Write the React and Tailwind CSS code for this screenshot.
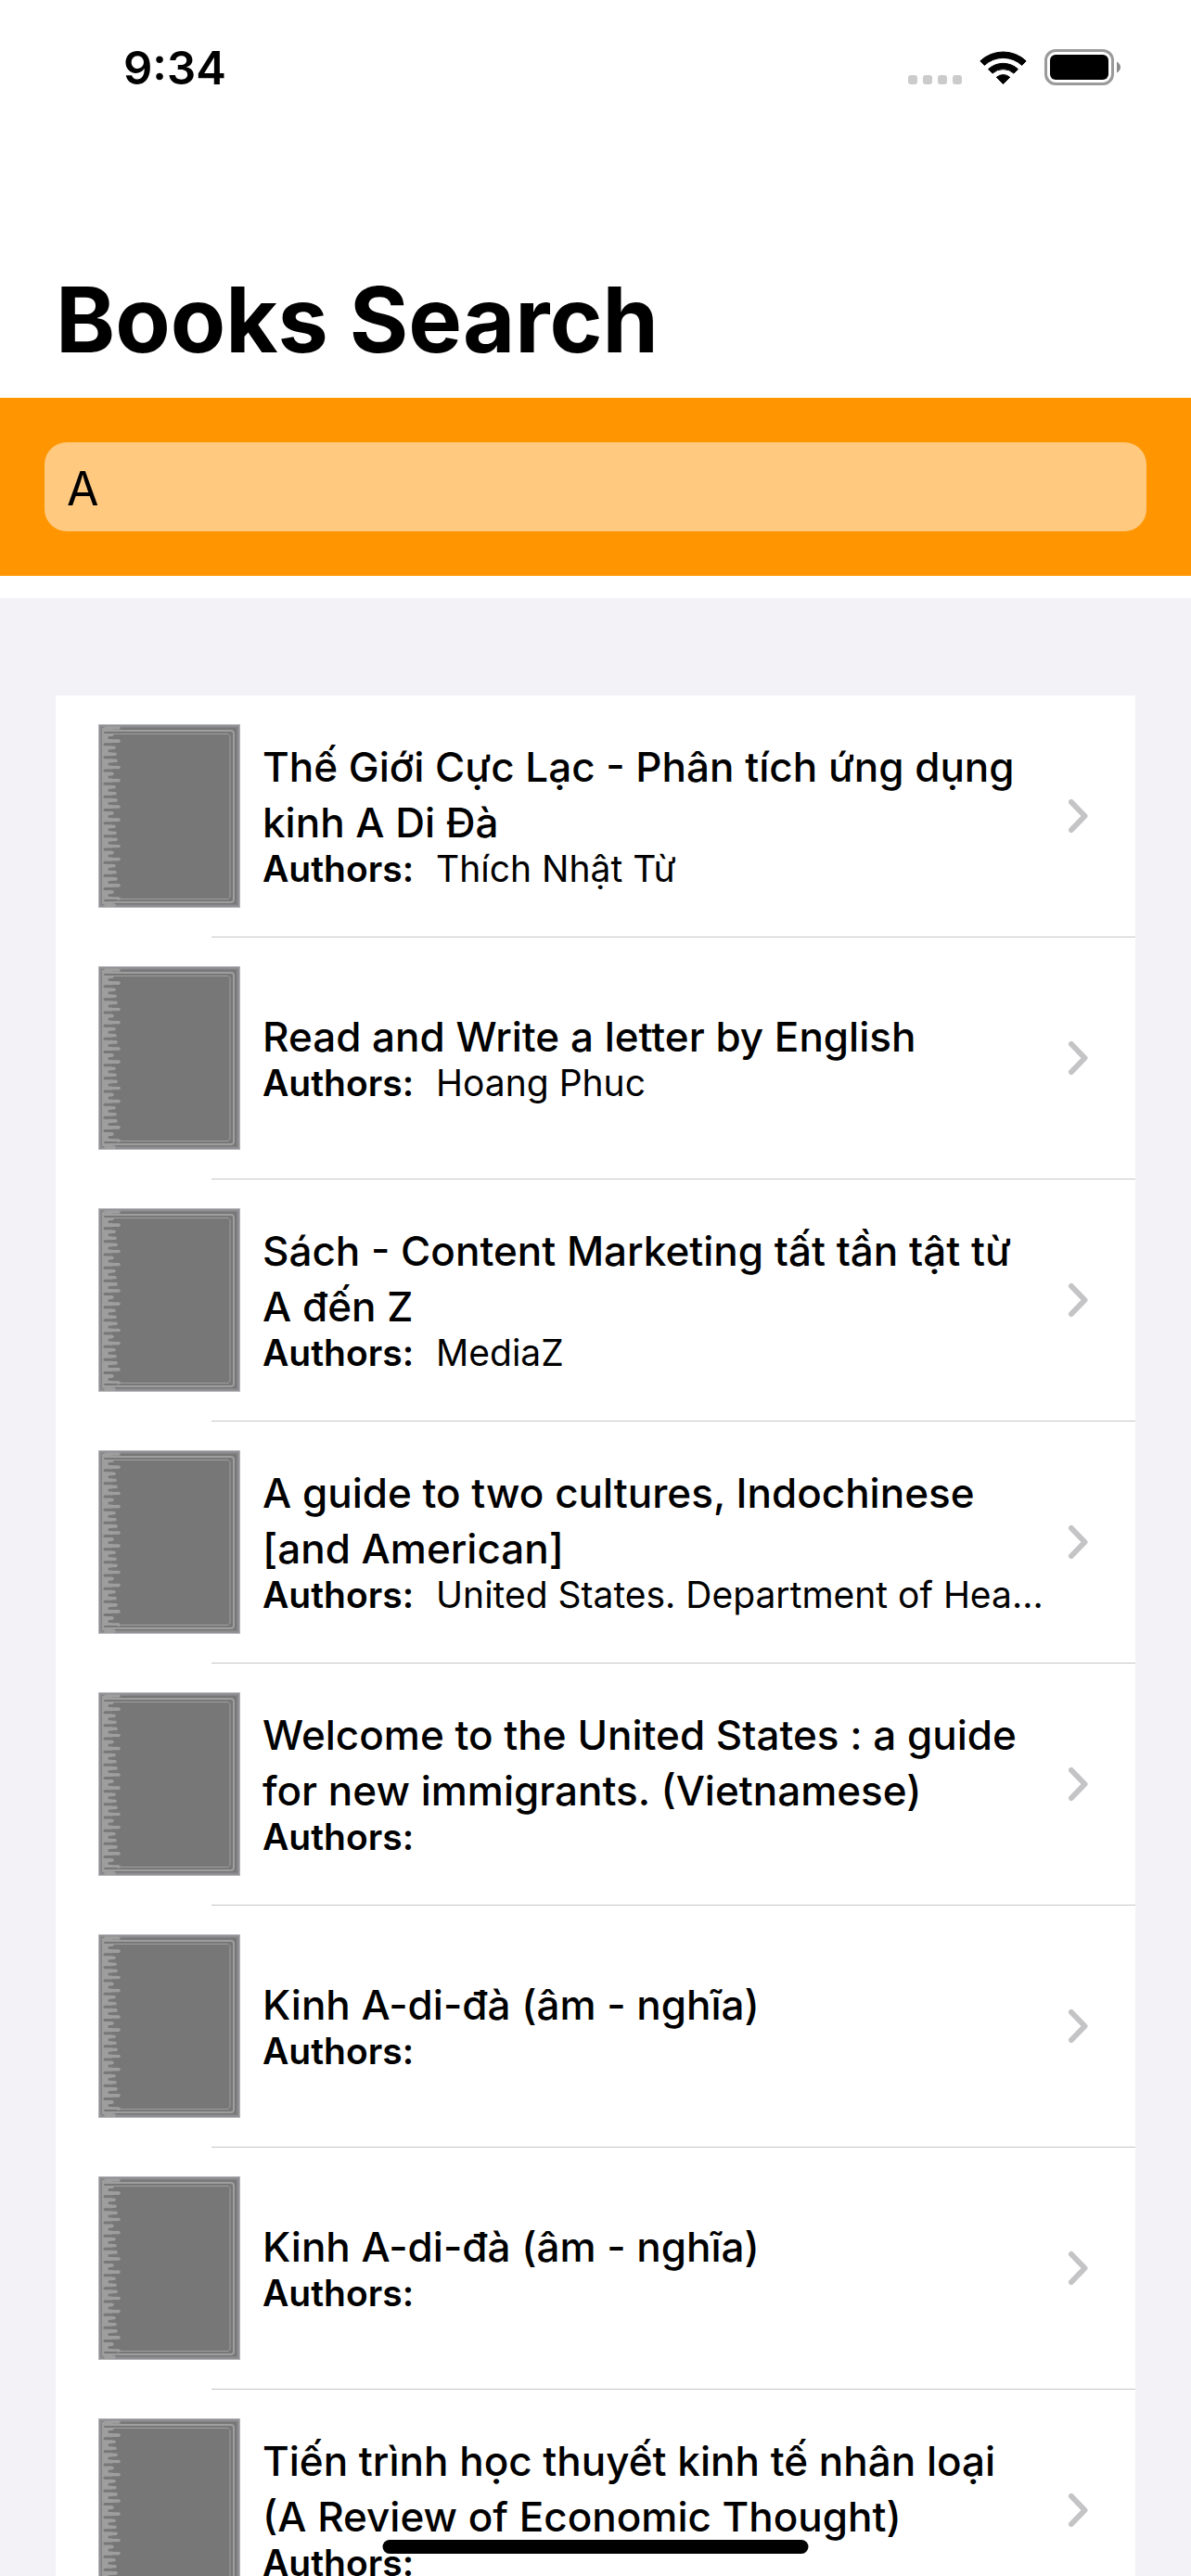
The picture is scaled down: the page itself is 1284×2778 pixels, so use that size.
const books = [
  { title: 'Thế Giới Cực Lạc - Phân tích ứng dụng kinh A Di Đà', authors: 'Thích Nhật Từ' },
  { title: 'Read and Write a letter by English', authors: 'Hoang Phuc' },
  { title: 'Sách - Content Marketing tất tần tật từ A đến Z', authors: 'MediaZ' },
  { title: 'A guide to two cultures, Indochinese [and American]', authors: 'United States. Department of Health, Education, and Welfare' },
  { title: 'Welcome to the United States : a guide for new immigrants. (Vietnamese)', authors: '' },
  { title: 'Kinh A-di-đà (âm - nghĩa)', authors: '' },
  { title: 'Kinh A-di-đà (âm - nghĩa)', authors: '' },
  { title: 'Tiến trình học thuyết kinh tế nhân loại (A Review of Economic Thought)', authors: '' },
];

// Right ends of the binding stitches; the pattern repeats down the spine.
const stitchEnds = [22, 15, 22, 17, 18, 19];
const stitchRows = Array.from({ length: 28 }, (_, i) => 4 + i * 7.08);

function Cover() {
  return (
    <svg viewBox="0 0 153 198" className="h-[198px] w-[153px] shrink-0" aria-hidden="true">
      <rect width="153" height="198" fill="#b4b4b8" />
      <rect x="1" y="1" width="151" height="196" fill="#8e8e93" />
      <rect x="3" y="3" width="147" height="192" fill="#838385" />
      <rect x="4" y="4" width="145" height="190" fill="#777777" />
      <path d="M6 7H143a3 3 0 0 1 3 3V189a3 3 0 0 1-3 3H6" fill="none" stroke="#9e9e9e" strokeWidth="2" />
      <path d="M6 10.500H140l2 2V186l-2 2.500H6" fill="none" stroke="#9e9e9e" />
      <rect x="4" y="4" width="11" height="190" fill="#9e9e9e" />
      <g stroke="#9e9e9e" strokeWidth="3.600" strokeLinecap="round">
        {stitchRows.map((y, i) => (
          <path key={y} d={`M8 ${y}H${stitchEnds[i % 6]}`} />
        ))}
      </g>
      <g stroke="#777777" strokeWidth="3" strokeLinecap="round">
        {stitchRows.slice(1, 26).map((y, i) => (
          <path key={y} d={`M${i % 2 ? 7 : 12} ${y + 3.54}H22`} />
        ))}
      </g>
      <g stroke="#777777" strokeWidth="2" strokeLinecap="round">
        <path d="M7 9H20M7 190H20" />
      </g>
    </svg>
  );
}

function StatusBar() {
  return (
    <div className="flex h-36 items-start justify-between pt-[52px] pr-[76px] pl-[133px]">
      <time className="text-[49px] leading-[44px] font-semibold">9:34</time>
      <svg viewBox="0 0 230 40" className="h-10 w-[230px]" role="img" aria-label="Wi-Fi on, battery full">
        <g fill="#cbcbcb">
          <rect x="1" y="29" width="10" height="10" rx="3" />
          <rect x="17" y="29" width="10" height="10" rx="3" />
          <rect x="33" y="29" width="10" height="10" rx="3" />
          <rect x="49" y="29" width="10" height="10" rx="3" />
        </g>
        <g transform="translate(78 2)" stroke="#000" strokeWidth="1" strokeLinejoin="round">
          <path d="M0.800 11.800a36 36 0 0 1 49.400 0l-4.500 4.600a29.500 29.500 0 0 0-40.400 0z" />
          <path d="M9.500 20.600a23.500 23.500 0 0 1 32 0l-4.500 4.500a17 17 0 0 0-23 0z" />
          <path d="M18.300 29.300a11 11 0 0 1 14.400 0l-7.200 7.200z" />
        </g>
        <rect x="149.500" y="2.500" width="72" height="36" rx="10.500" fill="none" stroke="#9a9a9a" strokeWidth="3" />
        <rect x="154" y="7" width="63" height="27" rx="6" />
        <path d="M226 14.500q4 2.500 4 6t-4 6z" fill="#8a8a8a" />
      </svg>
    </div>
  );
}

function BookRow({ title, authors }) {
  return (
    <li>
      <a href="#book" className="flex h-[260px] items-center pr-[51px] pl-[46px]">
        <Cover />
        <div className="ml-6 min-w-0 flex-1 pt-0.5">
          <h2 className="text-[44px] leading-[60px] font-medium">{title}</h2>
          <p className="-mt-1 flex gap-6 pb-1 text-[39px] leading-12">
            <span className="font-semibold">Authors:</span>
            <span className="min-w-0 truncate">{authors}</span>
          </p>
        </div>
        <svg viewBox="0 0 22 38" className="ml-6 h-[38px] w-[22px] shrink-0" fill="none" stroke="#c4c4c6" strokeWidth="6" strokeLinecap="round" strokeLinejoin="round" aria-hidden="true">
          <path d="M4 4l14.500 15L4 34" />
        </svg>
      </a>
      <div className="ml-42 h-px bg-[#c6c6c8]" />
    </li>
  );
}

export default function App() {
  return (
    <div className="relative flex h-screen flex-col overflow-hidden bg-white font-[Inter,'Noto_Sans',sans-serif] text-black">
      <StatusBar />
      <header className="px-[60px] pt-[141px] pb-6">
        <h1 className="text-[97px] leading-[120px] font-bold">Books Search</h1>
      </header>
      <form className="bg-[#ff9500] p-12">
        <input
          aria-label="Search books"
          defaultValue="A"
          className="block h-24 w-full rounded-3xl bg-[#ffca80] px-6 pt-1 text-[50px] outline-none"
        />
      </form>
      <main className="mt-6 min-h-0 flex-1 overflow-hidden bg-[#f2f2f7] px-[60px] pt-[105px]">
        <ul className="bg-white">
          {books.map((book, i) => (
            <BookRow key={i} {...book} />
          ))}
        </ul>
      </main>
      <div className="absolute bottom-6 left-1/2 h-[15px] w-[459px] -translate-x-1/2 rounded-full bg-black" />
    </div>
  );
}
